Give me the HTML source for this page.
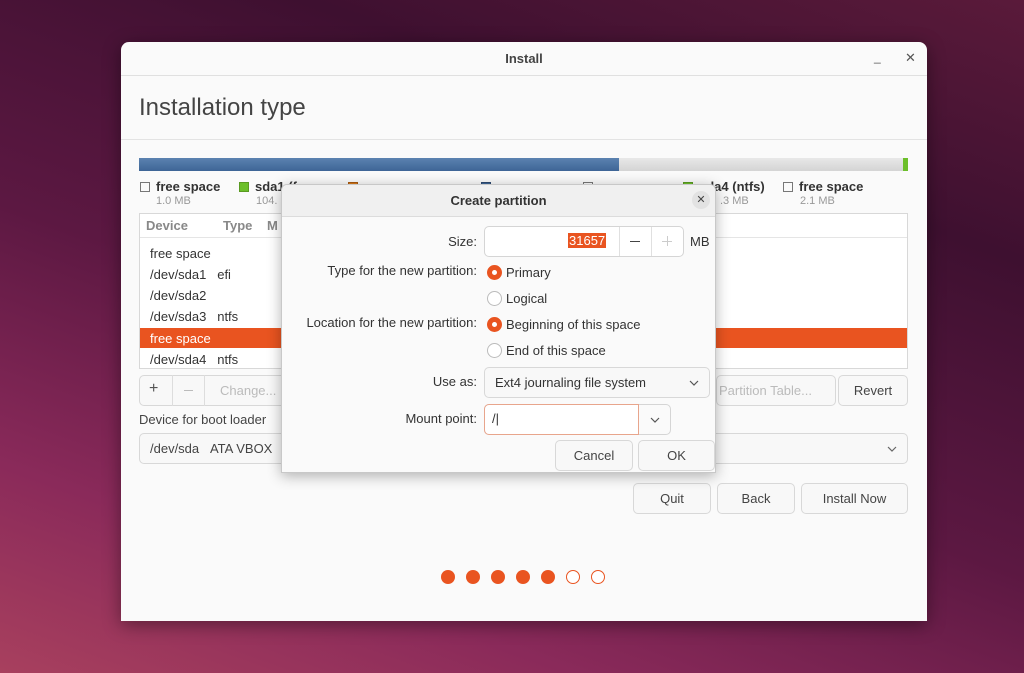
<!DOCTYPE html>
<html><head><style>
*{box-sizing:border-box;margin:0;padding:0}
body{width:1024px;height:673px;overflow:hidden;position:relative;font-family:"Liberation Sans",sans-serif;font-size:13px;color:#3d3d3d;
background:linear-gradient(200deg,#5a1a3a 0%,#3e1030 25%,#5c1842 55%,#8a2a5a 80%,#a8405e 100%)}
.a{position:absolute}
.win{left:121px;top:42px;width:806px;height:579px;background:#fafafa;border-radius:8px 8px 0 0;box-shadow:0 4px 18px rgba(0,0,0,.4)}
.btn{position:absolute;border:1px solid #d8d8d8;border-radius:5px;background:#f8f8f8;text-align:center;font-size:13px;color:#444}
.dot{position:absolute;width:14px;height:14px;border-radius:50%;background:#e95420;top:570px}
.dot.o{background:#fff;border:1.5px solid #e95420}
.lg{position:absolute;top:179px;font-size:13px;font-weight:bold;color:#333}
.sq{display:inline-block;width:10px;height:10px;border:1px solid #777;margin-right:6px;vertical-align:-1px}
.sub{position:absolute;top:195px;font-size:11px;color:#999}
.row{position:absolute;left:150px;font-size:13px;color:#333}
.rad{position:absolute;left:487px;width:15px;height:15px;border-radius:50%;border:1px solid #bbb;background:#fff}
.rad.on{background:#e95420;border-color:#e95420}
.rad.on:after{content:"";position:absolute;left:4px;top:4px;width:5px;height:5px;border-radius:50%;background:#fff}
.lbl{position:absolute;right:547px;font-size:13px;color:#333;text-align:right}
.rt{position:absolute;left:506px;font-size:13px;color:#333}
.chev{position:absolute;width:10px;height:6px}
</style></head><body>
<div class="a win"></div>
<div class="a" style="left:121px;top:51px;width:806px;text-align:center;font-weight:bold;font-size:13px;color:#444">Install</div>
<div class="a" style="left:874px;top:50px;font-size:12px;color:#555">_</div>
<div class="a" style="left:905px;top:50px;font-size:13px;color:#555">✕</div>
<div class="a" style="left:121px;top:75px;width:806px;height:1px;background:#e0e0e0"></div>
<div class="a" style="left:139px;top:94px;font-size:24px;color:#444">Installation type</div>
<div class="a" style="left:121px;top:139px;width:806px;height:1px;background:#e3e3e3"></div>
<div class="a" style="left:139px;top:158px;width:769px;height:13px;background:linear-gradient(#e8e8e8,#d4d4d4);border-radius:2px"></div>
<div class="a" style="left:139px;top:158px;width:480px;height:13px;background:linear-gradient(#5b82b0,#3e6596)"></div>
<div class="a" style="left:903px;top:158px;width:5px;height:13px;background:#6cbf2a"></div>
<div class="lg" style="left:140px"><span class="sq"></span>free space</div>
<div class="sub" style="left:156px">1.0 MB</div>
<div class="lg" style="left:239px"><span class="sq" style="background:#6cbf2a;border-color:#5a9a22"></span>sda1 (f</div>
<div class="sub" style="left:256px">104.</div>
<div class="lg" style="left:348px"><span class="sq" style="background:#d87a1a;border-color:#a85a10"></span></div>
<div class="lg" style="left:481px"><span class="sq" style="background:#3e6596;border-color:#2e4a70"></span></div>
<div class="lg" style="left:583px"><span class="sq"></span></div>
<div class="lg" style="left:683px"><span class="sq" style="background:#6cbf2a;border-color:#5a9a22"></span>sda4 (ntfs)</div>
<div class="sub" style="left:720px">.3 MB</div>
<div class="lg" style="left:783px"><span class="sq"></span>free space</div>
<div class="sub" style="left:800px">2.1 MB</div>
<div class="a" style="left:139px;top:213px;width:769px;height:156px;border:1px solid #d8d8d8;background:#fff"></div>
<div class="a" style="left:140px;top:237px;width:767px;height:1px;background:#e5e5e5"></div>
<div class="a" style="left:146px;top:218px;font-weight:bold;color:#888">Device</div>
<div class="a" style="left:223px;top:218px;font-weight:bold;color:#888">Type</div>
<div class="a" style="left:267px;top:218px;font-weight:bold;color:#888">M</div>
<div class="a" style="left:140px;top:328px;width:767px;height:20px;background:#e95420"></div>
<div class="row" style="top:246px">free space</div>
<div class="row" style="top:267px">/dev/sda1&nbsp;&nbsp;&nbsp;efi</div>
<div class="row" style="top:288px">/dev/sda2</div>
<div class="row" style="top:309px">/dev/sda3&nbsp;&nbsp;&nbsp;ntfs</div>
<div class="row" style="top:331px;color:#fff">free space</div>
<div class="row" style="top:352px">/dev/sda4&nbsp;&nbsp;&nbsp;ntfs</div>
<div class="btn" style="left:139px;top:375px;width:160px;height:31px"></div>
<div class="a" style="left:149px;top:380px;font-size:16px;color:#555">+</div>
<div class="a" style="left:172px;top:375px;width:1px;height:31px;background:#ddd"></div>
<div class="a" style="left:184px;top:390px;width:9px;height:1px;background:#bbb"></div>
<div class="a" style="left:204px;top:375px;width:1px;height:31px;background:#ddd"></div>
<div class="a" style="left:220px;top:383px;color:#bbb">Change...</div>
<div class="btn" style="left:716px;top:375px;width:120px;height:31px;color:#bbb;line-height:29px;text-align:left;padding-left:2px">Partition Table...</div>
<div class="btn" style="left:838px;top:375px;width:70px;height:31px;line-height:29px">Revert</div>
<div class="a" style="left:139px;top:412px;font-size:13px;color:#444">Device for boot loader</div>
<div class="btn" style="left:139px;top:433px;width:769px;height:31px;text-align:left;padding-left:10px;line-height:29px;color:#444">/dev/sda&nbsp;&nbsp;&nbsp;ATA VBOX</div>
<svg class="chev" style="left:887px;top:446px" viewBox="0 0 10 6"><path d="M1 1l4 4 4-4" fill="none" stroke="#666" stroke-width="1.2"/></svg>
<div class="btn" style="left:633px;top:483px;width:78px;height:31px;line-height:29px">Quit</div>
<div class="btn" style="left:717px;top:483px;width:78px;height:31px;line-height:29px">Back</div>
<div class="btn" style="left:801px;top:483px;width:107px;height:31px;line-height:29px">Install Now</div>
<div class="dot" style="left:441px"></div><div class="dot" style="left:466px"></div><div class="dot" style="left:491px"></div><div class="dot" style="left:516px"></div><div class="dot" style="left:541px"></div><div class="dot o" style="left:566px"></div><div class="dot o" style="left:591px"></div>

<div class="a" style="left:281px;top:184px;width:435px;height:289px;background:#fafafa;border:1px solid #c8c8c8;border-radius:6px 6px 0 0;box-shadow:0 3px 14px rgba(0,0,0,.3)"></div>
<div class="a" style="left:282px;top:185px;width:433px;height:32px;background:#f0f0f0;border-bottom:1px solid #dcdcdc;border-radius:6px 6px 0 0"></div>
<div class="a" style="left:281px;top:193px;width:435px;text-align:center;font-weight:bold;font-size:13px;color:#333">Create partition</div>
<div class="a" style="left:692px;top:191px;width:18px;height:18px;border-radius:50%;background:#e2e2e2;text-align:center;font-size:11px;line-height:18px;color:#444">✕</div>
<div class="lbl" style="top:234px">Size:</div>
<div class="a" style="left:484px;top:226px;width:200px;height:31px;border:1px solid #d5d5d5;border-radius:5px;background:#fff"></div>
<div class="a" style="left:568px;top:233px;background:#e95420;color:#fff;padding:0 1px;font-size:13px">31657</div>
<div class="a" style="left:619px;top:227px;width:1px;height:29px;background:#e0e0e0"></div>
<div class="a" style="left:651px;top:227px;width:1px;height:29px;background:#e0e0e0"></div>
<div class="a" style="left:630px;top:241px;width:10px;height:1px;background:#444"></div>
<div class="a" style="left:662px;top:241px;width:10px;height:1px;background:#ccc"></div>
<div class="a" style="left:667px;top:236px;width:1px;height:10px;background:#ccc"></div>
<div class="a" style="left:690px;top:234px;color:#333">MB</div>
<div class="lbl" style="top:263px">Type for the new partition:</div>
<div class="rad on" style="top:265px"></div><div class="rt" style="top:265px">Primary</div>
<div class="rad" style="top:291px"></div><div class="rt" style="top:291px">Logical</div>
<div class="lbl" style="top:315px">Location for the new partition:</div>
<div class="rad on" style="top:317px"></div><div class="rt" style="top:317px">Beginning of this space</div>
<div class="rad" style="top:343px"></div><div class="rt" style="top:343px">End of this space</div>
<div class="lbl" style="top:374px">Use as:</div>
<div class="btn" style="left:484px;top:367px;width:226px;height:31px;text-align:left;padding-left:10px;line-height:29px;font-size:13px;color:#333">Ext4 journaling file system</div>
<svg class="chev" style="left:689px;top:380px" viewBox="0 0 10 6"><path d="M1 1l4 4 4-4" fill="none" stroke="#555" stroke-width="1.2"/></svg>
<div class="lbl" style="top:411px">Mount point:</div>
<div class="a" style="left:484px;top:404px;width:187px;height:31px;border:1px solid #d5d5d5;border-radius:5px;background:#fafafa"></div>
<div class="a" style="left:484px;top:404px;width:155px;height:31px;border:1px solid #e8a58c;border-radius:5px 0 0 5px;background:#fff"></div>
<div class="a" style="left:492px;top:411px;color:#333">/|</div>
<svg class="chev" style="left:650px;top:417px" viewBox="0 0 10 6"><path d="M1 1l4 4 4-4" fill="none" stroke="#555" stroke-width="1.2"/></svg>
<div class="btn" style="left:555px;top:440px;width:78px;height:31px;line-height:29px">Cancel</div>
<div class="btn" style="left:638px;top:440px;width:77px;height:31px;line-height:29px">OK</div>
</body></html>
